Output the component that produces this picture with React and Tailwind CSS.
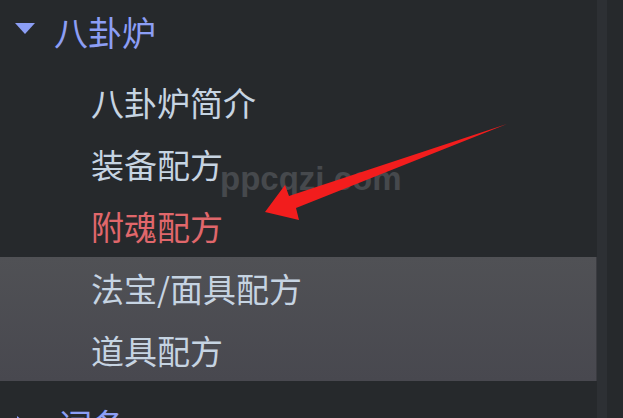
import React from "react";

const font = { fontFamily: '"Noto Sans CJK SC", "Noto Sans", sans-serif' };

function Item({ children, red }) {
  return (
    <div className="h-[62px] shrink-0 flex items-center pl-[91px]">
      <span className={`text-[33px] leading-none ${red ? "text-[#e0676b]" : "text-[#c6d4e2]"}`}>{children}</span>
    </div>
  );
}

export default function App() {
  return (
    <div className="relative w-[623px] h-[418px] overflow-hidden bg-[#26292c] flex" style={font}>
      <div className="w-[597px] shrink-0 flex flex-col">
        <div className="h-[64px] shrink-0 flex items-center">
          <svg width="22" height="14" viewBox="0 0 22 14" className="ml-[14px] mt-[-6px]">
            <polygon points="1,1 21,1 11,12" fill="#8c9ef5" />
          </svg>
          <span className="ml-[18px] text-[34px] leading-none text-[#8c9ef5]">八卦炉</span>
        </div>
        <div className="mt-[7px] shrink-0">
          <Item>八卦炉简介</Item>
          <Item>装备配方</Item>
          <Item red>附魂配方</Item>
          <div className="bg-gradient-to-b from-[#505155] to-[#48484f] border-r border-[#3a3b40]">
            <Item>法宝/面具配方</Item>
            <Item>道具配方</Item>
          </div>
        </div>
        <div className="mt-[12px] h-[64px] shrink-0 flex items-center">
          <svg width="14" height="20" viewBox="0 0 14 20" className="ml-[16px]">
            <polygon points="1,1 12,10 1,19" fill="#8c9ef5" />
          </svg>
          <span className="ml-[28px] text-[34px] leading-none text-[#8c9ef5]">词条</span>
        </div>
      </div>
      <div className="w-[10px] shrink-0 bg-[#2d3034]" />
      <div className="flex-1 bg-[#26292c]" />

      <div
        className="absolute left-[220px] top-[162px] text-[33px] leading-none font-bold text-[#46494d]"
        style={{ fontFamily: '"Liberation Sans", Arial, sans-serif' }}
      >
        ppcqzj.com
      </div>

      <svg className="absolute left-0 top-0" width="623" height="418" viewBox="0 0 623 418">
        <polygon
          points="265,212 285,185 289,196 507,124 296,208 299,220"
          fill="#f21d1d"
        />
      </svg>
    </div>
  );
}
